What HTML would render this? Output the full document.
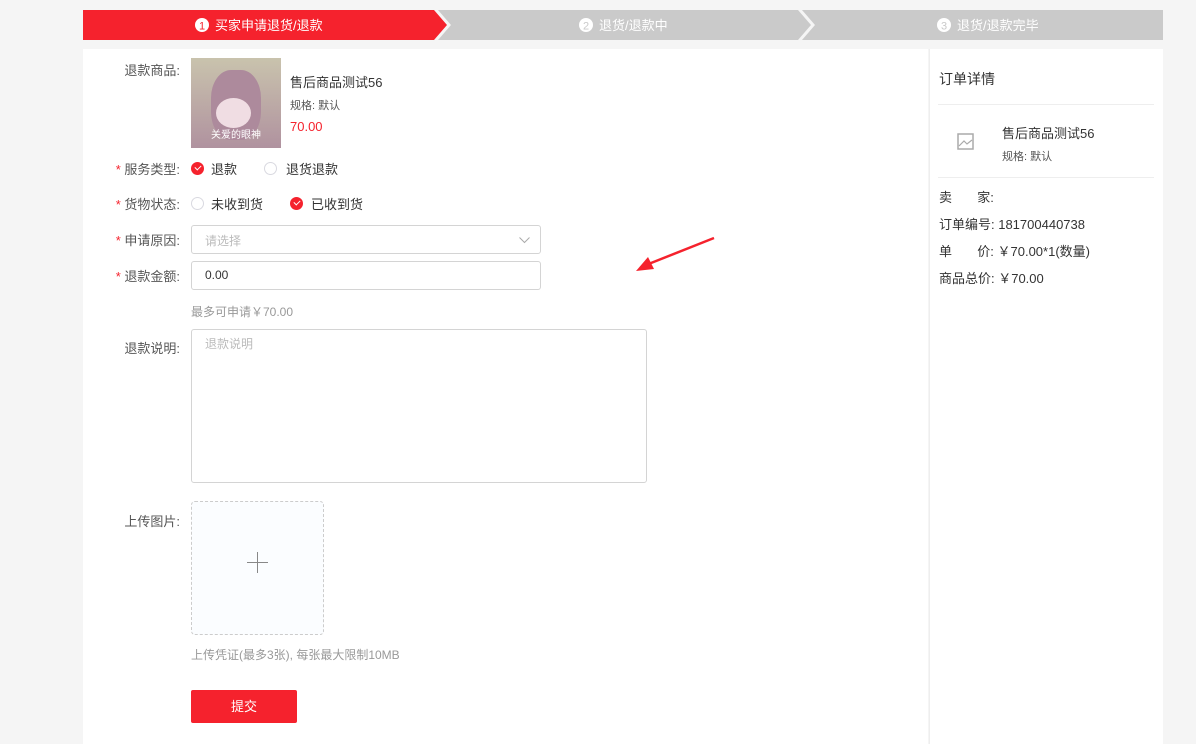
<!DOCTYPE html>
<html><head><meta charset="utf-8"><style>
*{margin:0;padding:0;box-sizing:border-box}
body{width:1196px;height:744px;background:#f5f5f5;font-family:"Liberation Sans","Noto Sans CJK SC",sans-serif;font-size:13px;color:#333;position:relative;overflow:hidden}
.abs{position:absolute}
.steps{left:83px;top:10px;width:1080px;height:30px}
.lbl{position:absolute;left:60px;width:120px;text-align:right;color:#555;font-size:13px;white-space:nowrap}
.star{color:#f5222d}
.radio{position:absolute;width:13px;height:13px;border-radius:50%;border:1px solid #d9d9e0;background:#fff}
.radio.on{background:#f5222d;border-color:#f5222d}
.radio.on:after{content:"";position:absolute;left:3px;top:2px;width:5px;height:3px;border-left:1.5px solid #fff;border-bottom:1.5px solid #fff;transform:rotate(-45deg)}
.input{position:absolute;border:1px solid #d4d4d4;border-radius:3px;background:#fff;font-size:12px}
</style></head><body>
<svg class="abs steps" width="1080" height="30">
<polygon points="355,0 715,0 728,15 715,30 355,30 368,15" fill="#cacaca"/>
<polygon points="719,0 1080,0 1080,30 719,30 732,15" fill="#cacaca"/>
<polygon points="0,0 351,0 364,15 351,30 0,30" fill="#f5222d"/>
<text x="119" y="19.5" text-anchor="middle" font-size="11" fill="#f5222d" font-family="Liberation Sans">1</text>
<circle cx="119" cy="15" r="7" fill="#fff"/><text x="119" y="19.5" text-anchor="middle" font-size="11" fill="#f5222d" font-family="Liberation Sans">1</text>
<text x="132" y="20" font-size="13" fill="#fff" font-family="Liberation Sans,Noto Sans CJK SC,sans-serif">买家申请退货/退款</text>
<circle cx="503" cy="15" r="7" fill="#fff"/><text x="503" y="19.5" text-anchor="middle" font-size="11" fill="#cacaca" font-family="Liberation Sans">2</text>
<text x="516" y="20" font-size="13" fill="#fff" font-family="Liberation Sans,Noto Sans CJK SC,sans-serif">退货/退款中</text>
<circle cx="861" cy="15" r="7" fill="#fff"/><text x="861" y="19.5" text-anchor="middle" font-size="11" fill="#cacaca" font-family="Liberation Sans">3</text>
<text x="874" y="20" font-size="13" fill="#fff" font-family="Liberation Sans,Noto Sans CJK SC,sans-serif">退货/退款完毕</text>
</svg>
<div class="abs" style="left:83px;top:49px;width:845px;height:695px;background:#fff"></div>
<div class="abs" style="left:929px;top:49px;width:234px;height:695px;background:#fff;border-left:1px solid #eee"></div>

<div class="lbl" style="top:60px">退款商品:</div>
<div class="abs" style="left:191px;top:58px;width:90px;height:90px;background:linear-gradient(#c9c3ad,#b0929f);overflow:hidden">
<div class="abs" style="left:20px;top:12px;width:50px;height:70px;border-radius:40%;background:#ad8a9c"></div>
<div class="abs" style="left:25px;top:40px;width:35px;height:30px;border-radius:50%;background:#f0dde3"></div>
<div class="abs" style="left:0;top:68px;width:90px;text-align:center;color:#fff;font-size:10px">关爱的眼神</div></div>
<div class="abs" style="left:290px;top:72px;font-size:13px">售后商品测试56</div>
<div class="abs" style="left:290px;top:97px;font-size:11px;color:#555">规格: 默认</div>
<div class="abs" style="left:290px;top:119px;font-size:13px;color:#f5222d">70.00</div>

<div class="lbl" style="top:159px"><span class="star">* </span>服务类型:</div>
<div class="radio on" style="left:191px;top:162px"></div><div class="abs" style="left:211px;top:159px">退款</div>
<div class="radio" style="left:264px;top:162px"></div><div class="abs" style="left:286px;top:159px">退货退款</div>
<div class="lbl" style="top:194px"><span class="star">* </span>货物状态:</div>
<div class="radio" style="left:191px;top:197px"></div><div class="abs" style="left:211px;top:194px">未收到货</div>
<div class="radio on" style="left:290px;top:197px"></div><div class="abs" style="left:311px;top:194px">已收到货</div>

<div class="lbl" style="top:230px"><span class="star">* </span>申请原因:</div>
<div class="input" style="left:191px;top:225px;width:350px;height:29px;color:#bbb;padding:6px 13px">请选择
<svg class="abs" style="right:10px;top:11px" width="11" height="7"><path d="M0.5 0.5L5.5 5.5L10.5 0.5" fill="none" stroke="#aaa"/></svg></div>
<div class="lbl" style="top:266px"><span class="star">* </span>退款金额:</div>
<div class="input" style="left:191px;top:261px;width:350px;height:29px;color:#333;padding:6px 13px">0.00</div>
<div class="abs" style="left:191px;top:303px;font-size:12px;color:#999">最多可申请￥70.00</div>

<div class="lbl" style="top:338px">退款说明:</div>
<div class="input" style="left:191px;top:329px;width:456px;height:154px;color:#bbb;padding:5px 13px">退款说明</div>

<div class="lbl" style="top:511px">上传图片:</div>
<div class="abs" style="left:191px;top:501px;width:133px;height:134px;border:1px dashed #ccc;border-radius:4px;background:#fbfdff"></div>
<div class="abs" style="left:247px;top:562px;width:21px;height:1px;background:#888"></div>
<div class="abs" style="left:257px;top:552px;width:1px;height:21px;background:#888"></div>
<div class="abs" style="left:191px;top:646px;font-size:12px;color:#999">上传凭证(最多3张), 每张最大限制10MB</div>
<div class="abs" style="left:191px;top:690px;width:106px;height:33px;background:#f5222d;border-radius:2px;color:#fff;text-align:center;line-height:33px">提交</div>

<svg class="abs" style="left:630px;top:232px" width="90" height="45"><path d="M84 6L16 33" stroke="#f5222d" stroke-width="2.5"/><polygon points="6,39 18,25 24,37" fill="#f5222d"/></svg>

<div class="abs" style="left:939px;top:69px;font-size:14px">订单详情</div>
<div class="abs" style="left:938px;top:104px;width:216px;height:1px;background:#eee"></div>
<svg class="abs" style="left:957px;top:133px" width="17" height="17"><rect x="1" y="1" width="15" height="15" fill="none" stroke="#aaa" stroke-width="1.5"/><path d="M2 13L7 8L10 11L15 7" fill="none" stroke="#aaa" stroke-width="1.2"/></svg>
<div class="abs" style="left:1002px;top:123px">售后商品测试56</div>
<div class="abs" style="left:1002px;top:148px;font-size:11px;color:#555">规格: 默认</div>
<div class="abs" style="left:938px;top:177px;width:216px;height:1px;background:#eee"></div>
<div class="abs" style="left:939px;top:187px">卖&nbsp;&nbsp;&nbsp;&nbsp;&nbsp;&nbsp;&nbsp;家:</div>
<div class="abs" style="left:939px;top:214px">订单编号: 181700440738</div>
<div class="abs" style="left:939px;top:241px">单&nbsp;&nbsp;&nbsp;&nbsp;&nbsp;&nbsp;&nbsp;价: ￥70.00*1(数量)</div>
<div class="abs" style="left:939px;top:268px">商品总价: ￥70.00</div>
</body></html>
